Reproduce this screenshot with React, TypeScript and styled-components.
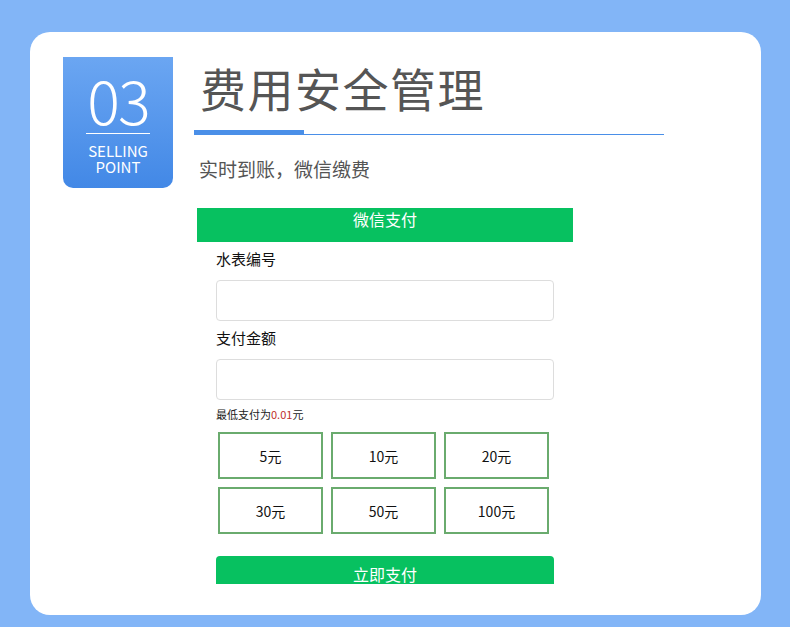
import React from "react";
import styled, { createGlobalStyle } from "styled-components";

const blue = "#4a8fe8";
const green = "#07c160";
const cjk = `"Noto Sans CJK SC", "Noto Sans", sans-serif`;

const GlobalStyle = createGlobalStyle`
  html, body {
    margin: 0;
    padding: 0;
    background: #82b5f7;
  }
  body {
    font-family: ${cjk};
  }
`;

// PAGE //
const Page = styled.div`
  width: 790px;
  height: 627px;
  padding: 32px 29px 0 30px;
  box-sizing: border-box;
`;

const Card = styled.div`
  width: 731px;
  height: 583px;
  background: #fff;
  border-radius: 20px;
  display: flex;
  gap: 21px;
  padding: 25px 0 0 33px;
  box-sizing: border-box;
`;

// BADGE //
const Badge = styled.div`
  width: 110px;
  height: 131px;
  flex-shrink: 0;
  border-radius: 0 0 10px 10px;
  background: linear-gradient(180deg, #6ba6f2 0%, #4288e6 100%);
  display: flex;
  flex-direction: column;
  align-items: center;
  color: #fff;
`;

const BadgeNumber = styled.div`
  font-family: ${cjk};
  font-weight: 300;
  font-size: 61px;
  line-height: 62px;
  margin-top: 11px;
  letter-spacing: -2px;
`;

const BadgeRule = styled.div`
  width: 64px;
  height: 1px;
  background: #fff;
  margin-top: 3px;
`;

const BadgeLabel = styled.div`
  font-family: ${cjk};
  font-size: 15px;
  line-height: 16px;
  text-align: center;
  margin-top: 9px;
`;

// MAIN //
const Main = styled.div`
  display: flex;
  flex-direction: column;
`;

const Title = styled.h1`
  margin: 0;
  padding: 0 0 0 6px;
  font-family: ${cjk};
  font-weight: 400;
  font-size: 46px;
  line-height: 60px;
  color: #555;
  letter-spacing: 1.5px;
`;

const Rule = styled.div`
  display: flex;
  align-items: flex-end;
  width: 470px;
  height: 5px;
  margin-top: 13px;
`;

const RuleThick = styled.div`
  width: 110px;
  height: 5px;
  background: ${blue};
`;

const RuleThin = styled.div`
  flex: 1;
  height: 1.5px;
  background: ${blue};
`;

const Subtitle = styled.p`
  margin: 20px 0 0 5px;
  font-size: 19px;
  line-height: 28px;
  color: #555;
`;

// PAY FORM //
const PayPanel = styled.div`
  width: 376px;
  height: 376px;
  margin: 25px 0 0 3px;
  overflow: hidden;
  background: #fff;
`;

const PayHeader = styled.div`
  height: 34px;
  background: ${green};
  color: #fff;
  font-size: 16px;
  line-height: 22px;
  text-align: center;
`;

const PayBody = styled.div`
  padding: 0 19px;
  display: flex;
  flex-direction: column;
`;

const FieldLabel = styled.div`
  font-size: 15px;
  line-height: 22px;
  color: #111;
  margin-top: 6px;
`;

const Field = styled.input`
  width: 338px;
  height: 41px;
  box-sizing: border-box;
  border: 1px solid #ddd;
  border-radius: 4px;
  margin-top: 10px;
  outline: none;
`;

const Hint = styled.div`
  font-size: 11px;
  line-height: 16px;
  color: #222;
  margin-top: 6px;

  & span {
    color: #c0302c;
  }
`;

const AmountGrid = styled.div`
  display: grid;
  grid-template-columns: repeat(3, 105px);
  grid-auto-rows: 47px;
  gap: 8px;
  margin: 10px 0 0 2px;
`;

const Amount = styled.button`
  border: 2px solid #6aab6e;
  background: #fff;
  font-family: ${cjk};
  font-size: 14px;
  color: #111;
  padding: 0;
  cursor: pointer;
`;

const PayButton = styled.button`
  display: block;
  width: 338px;
  height: 40px;
  margin-top: 22px;
  border: none;
  border-radius: 4px;
  background: ${green};
  color: #fff;
  font-family: ${cjk};
  font-size: 16px;
  line-height: 22px;
  padding: 7px 0 11px;
  box-sizing: border-box;
`;

const amounts = ["5元", "10元", "20元", "30元", "50元", "100元"];

const App: React.FunctionComponent = () => {
  return (
    <>
      <GlobalStyle />
      <Page>
        <Card>
          <Badge>
            <BadgeNumber>03</BadgeNumber>
            <BadgeRule />
            <BadgeLabel>
              SELLING
              <br />
              POINT
            </BadgeLabel>
          </Badge>
          <Main>
            <Title>费用安全管理</Title>
            <Rule>
              <RuleThick />
              <RuleThin />
            </Rule>
            <Subtitle>实时到账，微信缴费</Subtitle>
            <PayPanel>
              <PayHeader>微信支付</PayHeader>
              <PayBody>
                <FieldLabel>水表编号</FieldLabel>
                <Field />
                <FieldLabel>支付金额</FieldLabel>
                <Field />
                <Hint>
                  最低支付为<span>0.01</span>元
                </Hint>
                <AmountGrid>
                  {amounts.map((a) => (
                    <Amount key={a}>{a}</Amount>
                  ))}
                </AmountGrid>
                <PayButton>立即支付</PayButton>
              </PayBody>
            </PayPanel>
          </Main>
        </Card>
      </Page>
    </>
  );
};

export default App;
